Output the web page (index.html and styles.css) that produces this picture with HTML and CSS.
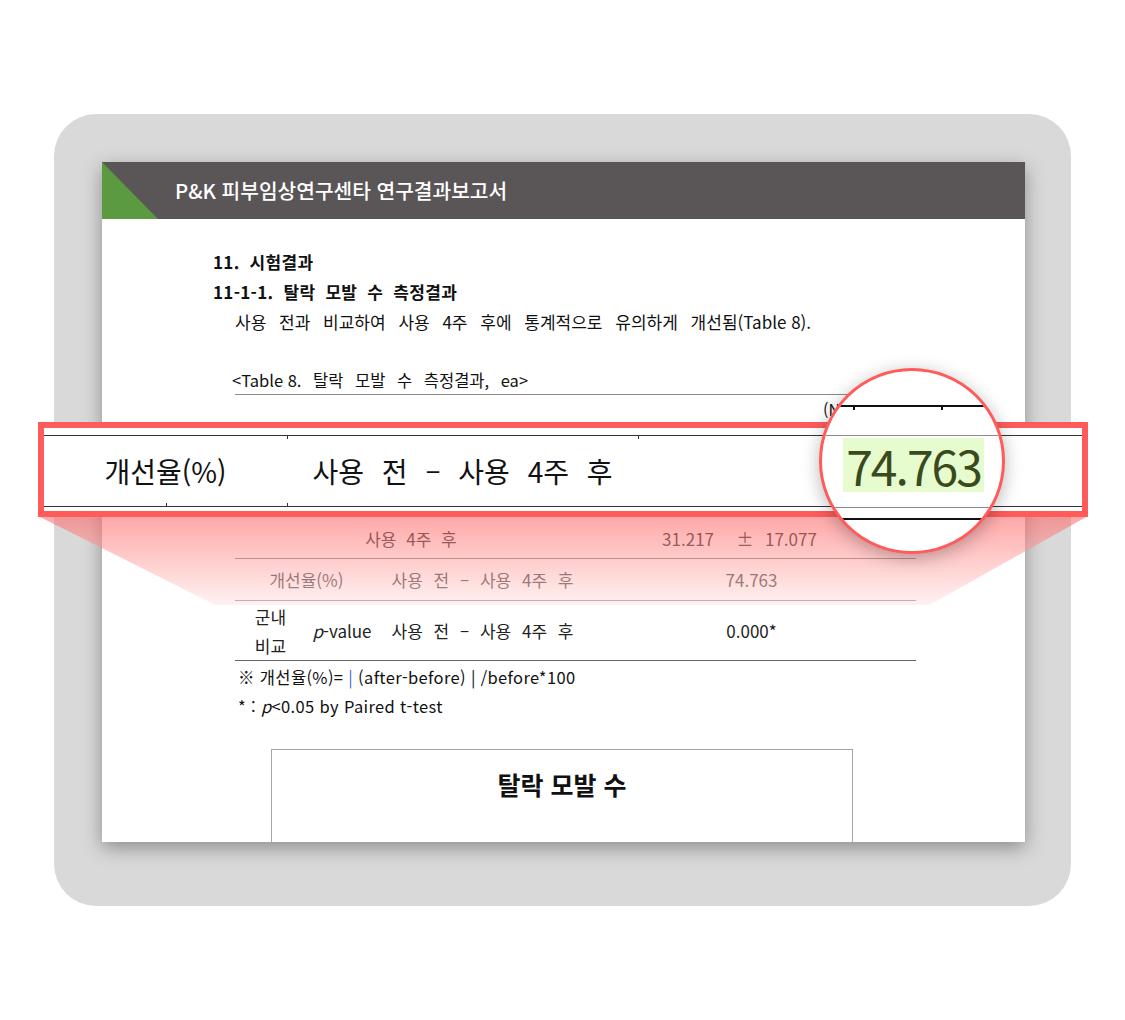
FILE: index.html
```html
<!DOCTYPE html>
<html lang="ko">
<head>
<meta charset="utf-8">
<title>탈락 모발 수 측정결과</title>
<link rel="stylesheet" href="styles.css">
</head>
<body>
<div class="stage">
  <div class="frame">
    <div class="page">
      <div class="page-head">
        <span class="tri"></span>
        <span class="head-title">P&amp;K 피부임상연구센타 연구결과보고서</span>
      </div>
      <div class="doc">
        <div class="h1">11. 시험결과</div>
        <div class="h2">11-1-1. 탈락 모발 수 측정결과</div>
        <p class="para">사용 전과 비교하여 사용 4주 후에 통계적으로 유의하게 <span class="nw">개선됨(Table 8).</span></p>
        <div class="tbl-wrap">
          <div class="caption"><span class="nw">&lt;Table 8.</span> 탈락 모발 수 측정결과, ea&gt;</div>
          <div class="n-row">(N=20)</div>
          <div class="hidden-rows"></div>
          <div class="trow row-a">
            <div class="c span3">사용 4주 후</div>
            <div class="c val">
              <span class="mean">31.217</span><span class="pm">±</span><span class="sd">17.077</span>
            </div>
          </div>
          <div class="trow row-b">
            <div class="c span2">개선율(%)</div>
            <div class="c ws">사용 전 – 사용 4주 후</div>
            <div class="c">74.763</div>
          </div>
          <div class="trow row-c">
            <div class="c two">군내<br>비교</div>
            <div class="c"><i>p</i>-value</div>
            <div class="c ws">사용 전 – 사용 4주 후</div>
            <div class="c">0.000*</div>
          </div>
          <div class="notes">
            <div>※ 개선율(%)= <span class="bar">|</span> (after-before) | /before*100</div>
            <div>* : <i>p</i>&lt;0.05 by Paired t-test</div>
          </div>
        </div>
        <div class="chart">
          <div class="chart-title">탈락 모발 수</div>
        </div>
      </div>
    </div>
  </div>

  <div class="funnel"></div>

  <div class="band">
    <div class="band-top">
      <span class="tick t1"></span><span class="tick t2"></span>
    </div>
    <div class="band-row">
      <div class="bc">개선율(%)</div>
      <div class="bc ws">사용 전 – 사용 4주 후</div>
      <div class="bc"></div>
    </div>
    <div class="band-bottom">
      <span class="tick b1"></span><span class="tick b2"></span>
    </div>
  </div>

  <div class="lens">
    <div class="lens-line">
      <span class="ltick k1"></span><span class="ltick k2"></span>
    </div>
    <div class="lens-gray g1"></div>
    <div class="lens-num"><span>74.763</span></div>
    <div class="lens-gray g2"></div>
    <div class="lens-black"></div>
  </div>
</div>
</body>
</html>
```

FILE: styles.css
```css
* { box-sizing: border-box; }

html, body {
  margin: 0;
  padding: 0;
  background: #ffffff;
  font-family: "Noto Sans CJK KR", "Noto Sans", sans-serif;
  color: #111;
}

.stage {
  position: relative;
  width: 1125px;
  height: 1020px;
  padding: 114px 0 0 54px;
  overflow: hidden;
}

.frame {
  width: 1017px;
  height: 792px;
  background: #d9d9d9;
  border-radius: 42px;
  padding: 48px 0 0 48px;
}

.page {
  width: 923px;
  height: 680px;
  background: #fff;
  overflow: hidden;
  box-shadow: 0 6px 18px rgba(0, 0, 0, 0.35);
}

.page-head {
  height: 57px;
  background: #5a5657;
  display: flex;
  align-items: center;
}

.tri {
  width: 56px;
  height: 57px;
  background: #5b9a40;
  clip-path: polygon(0 0, 0 100%, 100% 100%);
  align-self: stretch;
}

.head-title {
  margin-left: 17px;
  color: #fff;
  font-size: 20.3px;
  font-weight: 500;
  line-height: 57px;
}

.doc {
  padding: 28px 0 0 111px;
}

.h1, .h2 {
  font-size: 17px;
  font-weight: 700;
  line-height: 30px;
  letter-spacing: 0.3px;
  word-spacing: 5px;
}

.para {
  margin: 0 0 0 22px;
  font-size: 17px;
  line-height: 29px;
  word-spacing: 8px;
}

.nw { word-spacing: 0; }

.tbl-wrap {
  margin: 32px 0 0 22px;
  width: 681px;
  font-size: 17px;
}

.caption {
  font-size: 16.5px;
  line-height: 24px;
  padding-bottom: 2px;
  text-indent: -3px;
  border-bottom: 1px solid #8a8a8a;
  word-spacing: 7px;
}

.n-row {
  font-size: 16px;
  line-height: 28px;
  text-align: right;
  padding-right: 44px;
}

.hidden-rows {
  height: 96px;
}

.trow {
  display: grid;
  grid-template-columns: 71px 72px 209px 1fr;
  align-items: center;
  border-bottom: 1px solid #777;
  color: #222;
}

.row-a { height: 40px; }
.row-b { height: 42px; }
.row-c { height: 60px; border-bottom-color: #666; }

.c {
  text-align: center;
  line-height: 29px;
}

.span3 { grid-column: 1 / 4; word-spacing: 5px; }
.span2 { grid-column: 1 / 3; }
.ws { word-spacing: 6px; }

.val {
  display: grid;
  grid-template-columns: 142px 32px 1fr;
}
.mean { text-align: right; padding-right: 15px; }
.pm { text-align: center; }
.sd { text-align: left; padding-left: 4px; }

.notes {
  font-size: 16.5px;
  letter-spacing: 0.35px;
  padding: 2px 0 0 3px;
  line-height: 29px;
}
.bar { color: #4466cc; }

.chart {
  margin: 28px 0 0 58px;
  width: 582px;
  height: 140px;
  border: 1px solid #a6a6a6;
  padding-top: 19px;
}

.chart-title {
  text-align: center;
  font-size: 25px;
  font-weight: 700;
  line-height: 30px;
}

/* funnel gradient below the highlighted strip */
.funnel {
  position: absolute;
  left: 38px;
  top: 516px;
  width: 1050px;
  height: 89px;
  clip-path: polygon(0 0, 100% 0, 84.9% 100%, 16.9% 100%);
  background: linear-gradient(to bottom, rgba(255, 96, 96, 0.55), rgba(255, 230, 230, 0.55));
}

/* magnified strip */
.band {
  position: absolute;
  left: 38px;
  top: 422px;
  width: 1050px;
  height: 95px;
  border: 6px solid #ff5b5b;
  background: #fff;
  padding-top: 7px;
}

.band-top {
  height: 4px;
  border-top: 1px solid #333;
  display: flex;
}

.band-bottom {
  height: 4px;
  border-bottom: 1px solid #333;
  display: flex;
}

.tick {
  width: 1px;
  height: 3px;
  background: #333;
}
.t1 { margin-left: 243px; }
.t2 { margin-left: 350px; }
.b1 { margin-left: 122px; }
.b2 { margin-left: 120px; }

.band-row {
  height: 64px;
  display: grid;
  grid-template-columns: 243px 351px 1fr;
  align-items: center;
  font-size: 28px;
  color: #111;
}

.bc {
  text-align: center;
  line-height: 36px;
}
.band-row .ws { word-spacing: 10px; }

/* magnifier lens */
.lens {
  position: absolute;
  left: 819px;
  top: 368px;
  width: 186px;
  height: 186px;
  border-radius: 50%;
  border: 3px solid #ff5b5b;
  background: #fff;
  overflow: hidden;
  padding-top: 34px;
  box-shadow: 0 4px 18px rgba(0, 0, 0, 0.28);
}

.lens-line {
  height: 5px;
  border-top: 2px solid #111;
  display: flex;
}
.ltick {
  width: 2px;
  height: 3px;
  background: #111;
}
.k1 { margin-left: 31px; }
.k2 { margin-left: 86px; }

.lens-gray {
  height: 1px;
  background: #8a8a8a;
}
.g1 { margin-top: 25px; }
.g2 { margin-top: 15px; }

.lens-num {
  margin: 2px 0 0 21px;
  width: 141px;
  height: 54px;
  background: #e6fccf;
  display: flex;
  align-items: center;
  justify-content: center;
}
.lens-num span {
  font-size: 48px;
  line-height: 54px;
  color: #3b4a1c;
  letter-spacing: -2px;
}

.lens-black {
  margin-top: 10px;
  height: 2px;
  background: #111;
}
```
